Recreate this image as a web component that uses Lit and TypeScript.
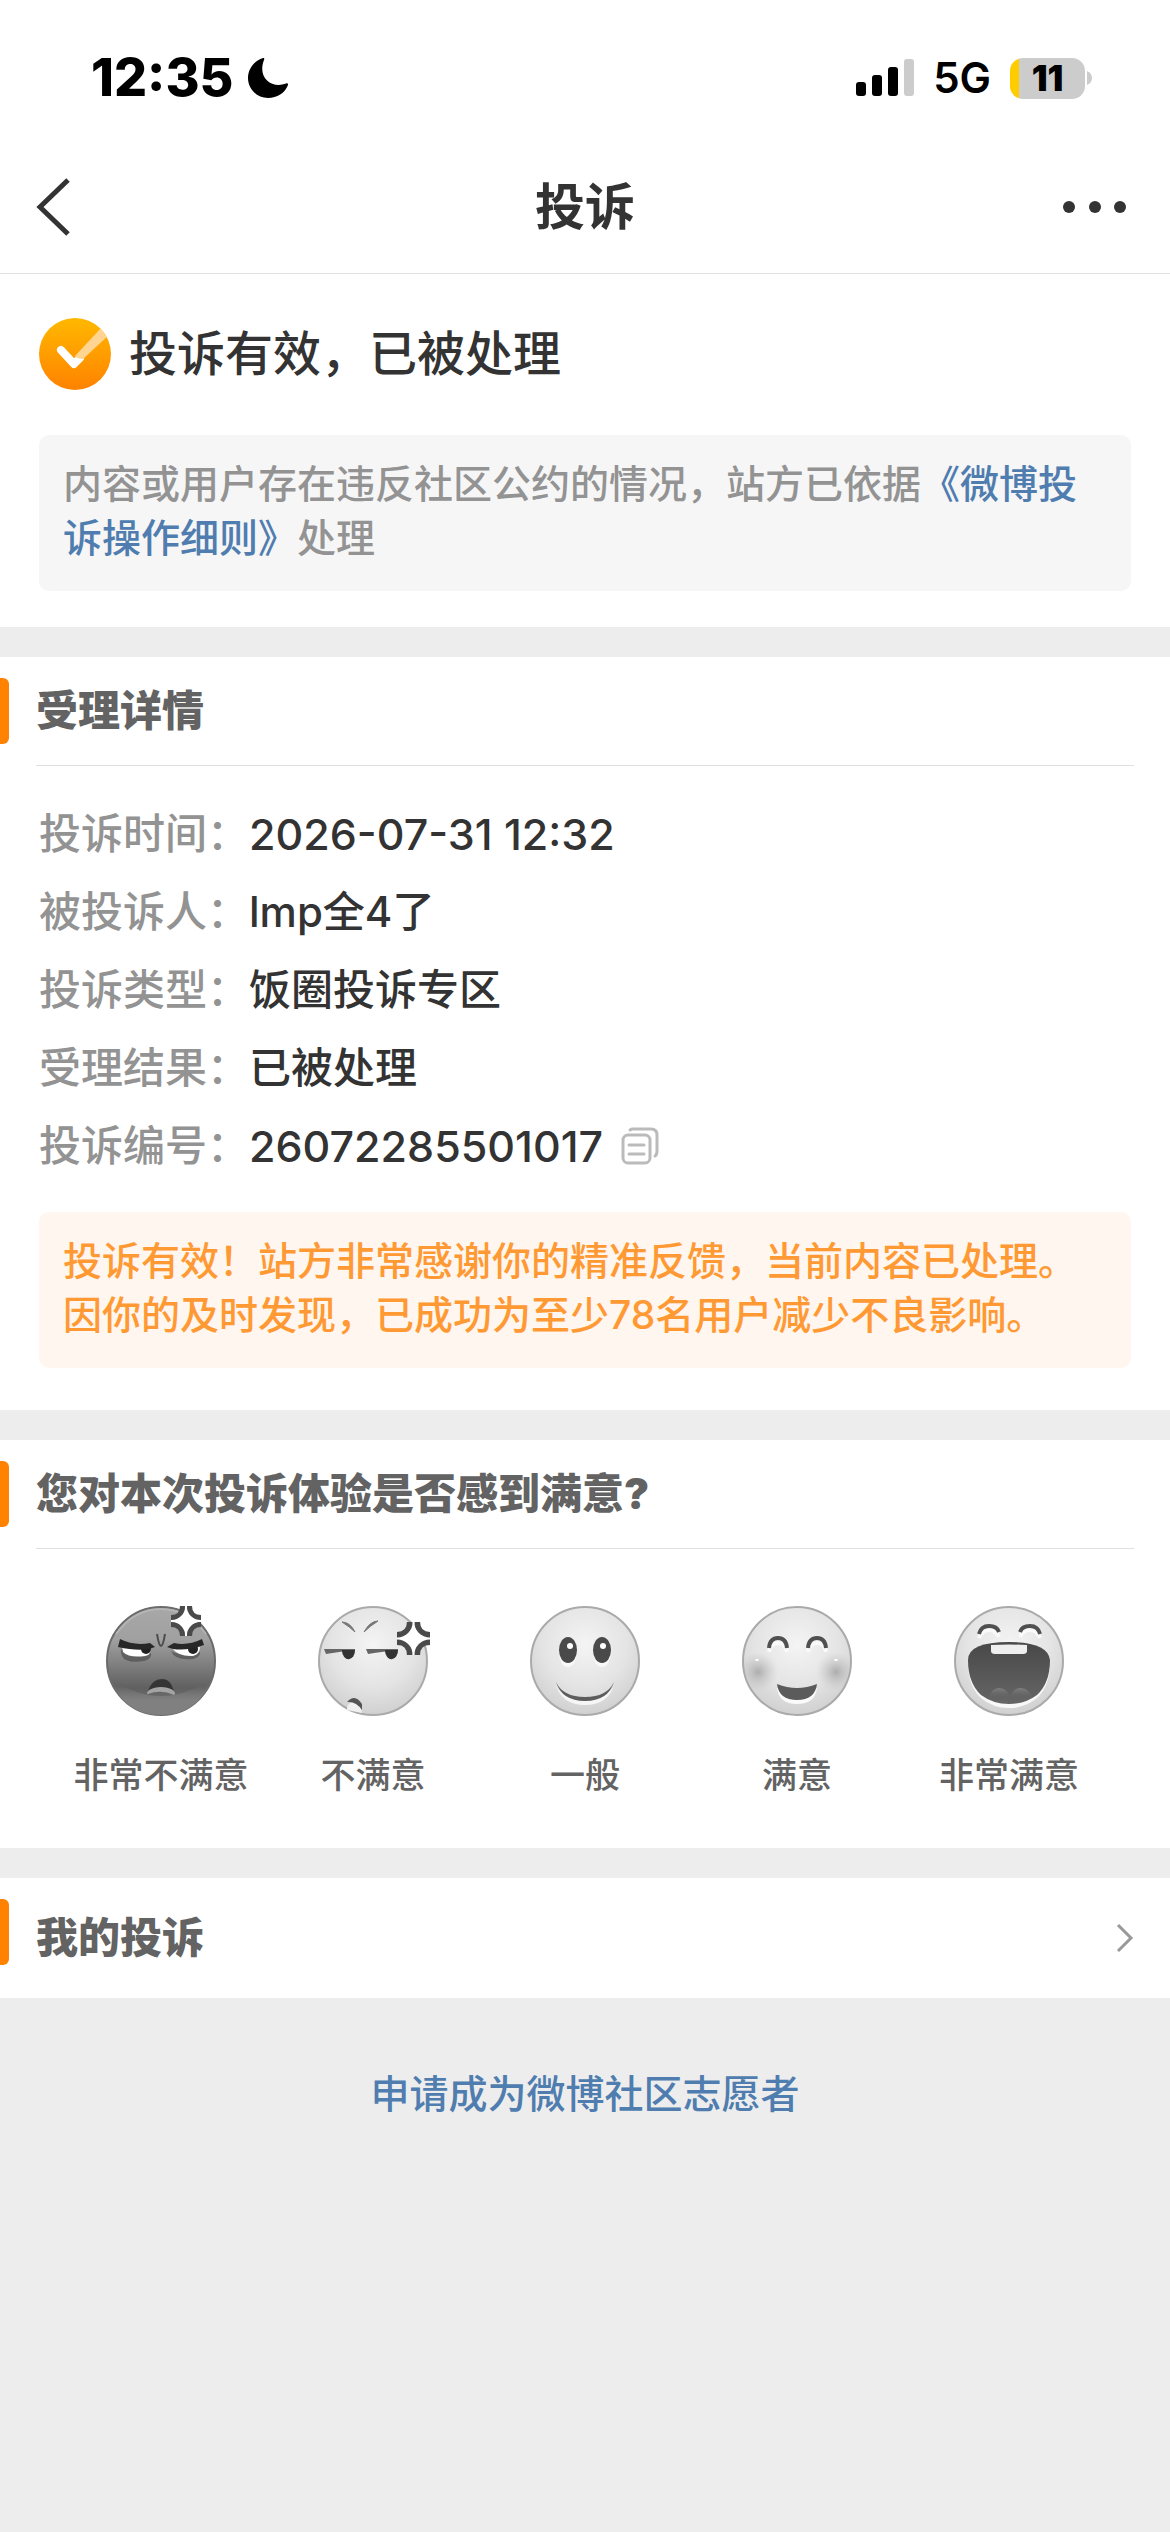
import { LitElement, html, css, svg } from "lit";
import { customElement, property, state } from "lit/decorators.js";

const details = [
  { label: "投诉时间：", value: "2026-07-31 12:32", numeric: true },
  { label: "被投诉人：", value: "lmp全4了" },
  { label: "投诉类型：", value: "饭圈投诉专区" },
  { label: "受理结果：", value: "已被处理" },
  { label: "投诉编号：", value: "26072285501017", numeric: true, copy: true },
];

const ratings = [
  { key: "furious", label: "非常不满意" },
  { key: "unhappy", label: "不满意" },
  { key: "neutral", label: "一般" },
  { key: "happy", label: "满意" },
  { key: "laughing", label: "非常满意" },
];

// the comic "vein" mark, 30 units wide
const vein = svg`
  <path d="M14 0h2a14 14 0 0 0 14 14v2a14 14 0 0 0-14 14h-2A14 14 0 0 0 0 16v-2A14 14 0 0 0 14 0z" fill="#fff" />
  <g fill="#4a4a4a">
    <path d="M9 0h5A14 13 0 0 1 0 14V9q9 0 9-9z" />
    <path d="M21 0h-5a14 13 0 0 0 14 14V9q-9 0-9-9z" />
    <path d="M9 30h5A14 13 0 0 0 0 16v5q9 0 9 9z" />
    <path d="M21 30h-5a14 13 0 0 1 14-14v5q-9 0-9 9z" />
  </g>
`;

const faces = {
  furious: svg`
    <circle cx="55" cy="55" r="54" fill="url(#dark)" stroke="#6b6b6b" stroke-width="2" />
    <path d="M4 72q51 36 102 0q-14 37-51 37T4 72z" fill="url(#chin)" />
    <path d="M10 28Q28 3 55 3t45 25" fill="none" stroke="#bbb" stroke-width="2" opacity="0.7" />
    <path d="M15 43q10 6 30 4q1 6-7 8q-18 3-22-5q-2-4-1-7z" fill="#222" opacity="0.4" />
    <path d="M16 40q12 4 29 2q0 7-6 8-16 2-22-4z" fill="#fff" />
    <circle cx="40" cy="43" r="5" fill="#222" />
    <path d="M14 33q14 7 30 4l5 4-6 2q-13 2-31-2z" fill="#272727" />
    <path d="M65 45q12 6 29 1 1 5-7 7-18 2-22-8z" fill="#222" opacity="0.4" />
    <path d="M66 42q14 2 28-1 0 7-7 9-14 1-21-8z" fill="#fff" />
    <circle cx="87" cy="43" r="5" fill="#222" />
    <path d="M96 33q-14 7-28 4l-7 4 6 2q14 2 31-4z" fill="#272727" />
    <path d="M51 28q2 12 4 12t4-12" fill="none" stroke="#4c4c4c" stroke-width="2" />
    <path d="M42 85q4-12 14-12 9 0 12 13-13-7-26-1z" fill="#353535" />
    <path d="M41 88q0-6 14-7 14 1 14 7l-1 1q-13-6-26-1z" fill="#a3a3a3" />
    <g transform="translate(65 0)">${vein}</g>
  `,
  unhappy: svg`
    <circle cx="55" cy="55" r="54" fill="url(#light)" stroke="#aaa" stroke-width="2" />
    <path d="M24 16q8 0 13 10-5-5-13-10z" fill="#777" stroke="#777" />
    <path d="M60 15q-8 0-14 11 6-6 14-11z" fill="#777" stroke="#777" />
    <path d="M6 43h31v2q-14 0-29 3z" fill="#666" />
    <path d="M24 44h13a6 8 0 0 1-13 1z" fill="#333" />
    <path d="M48 43h32v2q-14 0-30 3z" fill="#666" />
    <path d="M67 44h13a6 8 0 0 1-13 1z" fill="#333" />
    <path d="M29 104q0-8 7-8 8 0 8 11z" fill="#f0f0f0" />
    <path d="M29 96q8-9 15 2v6q-6-9-15-8z" fill="#555" />
    <g transform="translate(79 16) scale(1.1)">${vein}</g>
  `,
  neutral: svg`
    <circle cx="55" cy="55" r="54" fill="url(#light)" stroke="#aaa" stroke-width="2" />
    <ellipse cx="38" cy="47" rx="9" ry="14" fill="#f8f8f8" />
    <ellipse cx="72" cy="47" rx="9" ry="14" fill="#f8f8f8" />
    <ellipse cx="38" cy="44" rx="9" ry="13" fill="#4a4a4a" />
    <ellipse cx="72" cy="44" rx="9" ry="13" fill="#4a4a4a" />
    <circle cx="40" cy="40" r="3" fill="#fff" />
    <circle cx="73" cy="40" r="3" fill="#fff" />
    <path d="M26 79q7 15 29 15t29-15q-6 20-29 20t-29-20z" fill="#f6f6f6" />
    <path d="M26 76q7 15 29 15t29-15q-6 19-29 19t-29-19z" fill="#5d5d5d" />
  `,
  happy: svg`
    <circle cx="55" cy="55" r="54" fill="url(#light)" stroke="#aaa" stroke-width="2" />
    <circle cx="55" cy="55" r="53" fill="url(#blush-left)" />
    <circle cx="55" cy="55" r="53" fill="url(#blush-right)" />
    <ellipse cx="15" cy="54" rx="2" ry="1" fill="#fff" />
    <ellipse cx="94" cy="54" rx="2" ry="1" fill="#fff" />
    <g fill="none" stroke-width="4">
      <path d="M27 46q1-9 9-9t9 9M66 46q1-9 9-9t9 9" stroke="#fafafa" />
      <path d="M27 42q1-10 9-10t9 10M66 42q1-10 9-10t9 10" stroke="#505050" />
    </g>
    <path d="M35 82q2 16 20 16t20-16" fill="#fafafa" />
    <path d="M35 78q20 8 40 0-2 16-20 16T35 78z" fill="#5b5b5b" />
  `,
  laughing: svg`
    <circle cx="55" cy="55" r="54" fill="url(#light)" stroke="#aaa" stroke-width="2" />
    <g fill="none" stroke-width="4">
      <path d="M25 32q3-8 10-8t10 7M66 31q3-7 10-7t10 8" stroke="#fafafa" />
      <path d="M25 28q2-8 10-8t10 6M66 26q2-6 10-6t10 8" stroke="#505050" />
    </g>
    <path d="M55 39q39 0 41 18 0 23-13 35-12 10-28 10T27 92Q14 80 14 57q0-18 41-18z" fill="#f8f8f8" />
    <path d="M55 36q39 0 41 18 0 23-13 35-12 9-28 9T27 89Q14 77 14 54q0-18 41-18z" fill="url(#mouth)" />
    <path d="M35 92q2-10 10-10 9 0 11 10 2-10 11-10 8 0 11 10z" fill="url(#tongue)" />
    <path d="M37 39q18-1 36 0v6q0 3-4 3H41q-4 0-4-3z" fill="#eee" />
  `,
};

@customElement("rating-face")
class RatingFace extends LitElement {
  @property() kind = "neutral";

  static styles = css`
    :host {
      display: block;
      width: 110px;
      height: 110px;
    }
    .face {
      display: block;
      width: 100%;
      height: 100%;
      overflow: visible;
    }
  `;

  render() {
    return html`
      <svg class="face" viewBox="0 0 110 110" aria-hidden="true">
        <defs>
          <radialGradient id="light" cx="0.5" cy="0.35" r="0.65">
            <stop offset="0" stop-color="#f4f4f4" />
            <stop offset="0.6" stop-color="#e4e4e4" />
            <stop offset="1" stop-color="#d0d0d0" />
          </radialGradient>
          <linearGradient id="dark" x1="0" y1="0" x2="0" y2="1">
            <stop offset="0" stop-color="#a8a8a8" />
            <stop offset="0.3" stop-color="#a0a0a0" />
            <stop offset="0.75" stop-color="#606060" />
            <stop offset="1" stop-color="#7d7d7d" />
          </linearGradient>
          <linearGradient id="chin" x1="0" y1="0" x2="0" y2="1">
            <stop offset="0.2" stop-color="#808080" stop-opacity="0" />
            <stop offset="0.6" stop-color="#808080" />
          </linearGradient>
          <radialGradient id="blush-left" gradientUnits="userSpaceOnUse" cx="16" cy="66" r="20">
            <stop offset="0" stop-color="#adadad" />
            <stop offset="1" stop-color="#c8c8c8" stop-opacity="0" />
          </radialGradient>
          <radialGradient id="blush-right" gradientUnits="userSpaceOnUse" cx="94" cy="66" r="20">
            <stop offset="0" stop-color="#adadad" />
            <stop offset="1" stop-color="#c8c8c8" stop-opacity="0" />
          </radialGradient>
          <linearGradient id="mouth" x1="0" y1="0" x2="0" y2="1">
            <stop offset="0" stop-color="#484848" />
            <stop offset="1" stop-color="#666" />
          </linearGradient>
          <linearGradient id="tongue" x1="0" y1="0" x2="0" y2="1">
            <stop offset="0" stop-color="#808080" />
            <stop offset="1" stop-color="#666" stop-opacity="0" />
          </linearGradient>
        </defs>
        ${faces[this.kind]}
      </svg>
    `;
  }
}

@customElement("app-root")
class AppRoot extends LitElement {
  @state() rating = "";

  _copy() {
    navigator.clipboard?.writeText("26072285501017");
  }

  _rate(key: string) {
    this.rating = key;
  }

  _statusBar() {
    return html`
      <div class="status">
        <div class="clock">
          <span class="time">12:35</span>
          <svg class="moon" viewBox="0 0 40 40" aria-hidden="true">
            <path d="M15 0C6 3 0 11 0 20c0 11 9 20 20 20 9 0 17-5 20-13 .4-1.500-.6-2-2-1.500C24 31 9 20 16 2c.6-1.500.3-2.300-1-2z" />
          </svg>
        </div>
        <div class="signals">
          <svg class="bars" viewBox="0 0 58 38" aria-hidden="true">
            <rect x="0" y="23" width="10" height="14" rx="3" />
            <rect x="16" y="16" width="10" height="21" rx="3" />
            <rect x="32" y="8" width="10" height="29" rx="3" />
            <rect x="48" y="0" width="10" height="37" rx="3" fill="#ccc" />
          </svg>
          <span class="network">5G</span>
          <div class="battery">
            <span class="level">11</span>
            <svg class="nub" viewBox="0 0 5 14" aria-hidden="true">
              <path d="M0 0q5 2 5 7t-5 7z" fill="#ccc" />
            </svg>
          </div>
        </div>
      </div>
    `;
  }

  render() {
    return html`
      ${this._statusBar()}
      <header class="nav">
        <button class="icon-button" aria-label="返回">
          <svg width="34" height="58" viewBox="0 0 34 58">
            <path d="M32 2L4 29l28 27" fill="none" stroke="#333" stroke-width="5" />
          </svg>
        </button>
        <h1 class="nav-title">投诉</h1>
        <button class="icon-button" aria-label="更多">
          <svg width="72" height="14" viewBox="0 0 72 14" fill="#333">
            <circle cx="7" cy="7" r="6" />
            <circle cx="33" cy="7" r="6" />
            <circle cx="58" cy="7" r="6" />
          </svg>
        </button>
      </header>

      <main class="sections">
        <section class="panel result">
          <div class="verdict">
            <svg width="72" height="72" viewBox="0 0 72 72" aria-hidden="true">
              <defs>
                <linearGradient id="sun" x1="0" y1="0" x2="0" y2="1">
                  <stop offset="0" stop-color="#ffb800" />
                  <stop offset="1" stop-color="#ff8200" />
                </linearGradient>
                <clipPath id="disc"><circle cx="36" cy="36" r="36" /></clipPath>
              </defs>
              <circle cx="36" cy="36" r="36" fill="url(#sun)" />
              <path d="M22 32L35 46l6-6" fill="none" stroke="#fff" stroke-width="8" stroke-linecap="round" stroke-linejoin="round" />
              <path d="M62 10L36 38q2 3 8 3L72 15z" fill="#ffd591" clip-path="url(#disc)" />
            </svg>
            <h2 class="verdict-text">投诉有效，已被处理</h2>
          </div>
          <p class="note">内容或用户存在违反社区公约的情况，站方已依据<a class="link" href="#rules">《微博投诉操作细则》</a>处理</p>
        </section>

        <section class="panel">
          <div class="head"><h2 class="head-title">受理详情</h2></div>
          <dl class="details">
            ${details.map((item) => html`
              <div class="detail">
                <dt class="label">${item.label}</dt>
                <dd class="value ${item.numeric ? "numeric" : ""}">
                  ${item.value}
                  ${item.copy ? html`
                    <button class="icon-button" aria-label="复制" @click=${this._copy}>
                      <svg width="38" height="38" viewBox="0 0 38 38" fill="none" stroke="#bbb" stroke-width="3" stroke-linecap="round">
                        <rect x="2" y="8" width="27" height="28" rx="5" />
                        <path d="M9 3q1-1 3-1h18q6 0 6 6v16q0 4-2 5M8 18h15M8 27h15" />
                      </svg>
                    </button>
                  ` : ""}
                </dd>
              </div>
            `)}
          </dl>
          <p class="note thanks">投诉有效！站方非常感谢你的精准反馈，当前内容已处理。因你的及时发现，已成功为至少78名用户减少不良影响。</p>
        </section>

        <section class="panel">
          <div class="head"><h2 class="head-title">您对本次投诉体验是否感到满意?</h2></div>
          <div class="ratings">
            ${ratings.map((item) => html`
              <button class="rating" aria-pressed=${this.rating === item.key} @click=${() => this._rate(item.key)}>
                <rating-face kind=${item.key}></rating-face>
                <span class="rating-label">${item.label}</span>
              </button>
            `)}
          </div>
        </section>

        <a class="panel head mine" href="#mine">
          <span class="head-title">我的投诉</span>
          <svg width="18" height="30" viewBox="0 0 18 30" aria-hidden="true">
            <path d="M2 2l13 13L2 28" fill="none" stroke="#999" stroke-width="3" />
          </svg>
        </a>
      </main>

      <footer class="footer">
        <a class="link" href="#volunteer">申请成为微博社区志愿者</a>
      </footer>
    `;
  }

  static styles = css`
    :host {
      display: block;
      min-height: 100vh;
      background: #ededed;
      color: #333;
      font-family: Inter, "Noto Sans CJK SC", sans-serif;
      font-size: 42px;
      font-weight: 500;
    }
    h1, h2, p, dl, dd {
      margin: 0;
    }
    svg {
      display: block;
      flex: none;
    }
    button {
      padding: 0;
      border: none;
      background: none;
      color: inherit;
      font: inherit;
      cursor: pointer;
    }
    .status {
      display: flex;
      align-items: center;
      justify-content: space-between;
      padding: 48px 78px 48px 91px;
      line-height: 60px;
      background: #fff;
      color: #000;
    }
    .clock, .signals {
      display: flex;
      align-items: center;
    }
    .clock {
      gap: 14px;
    }
    .signals {
      gap: 19px;
    }
    .time {
      font-size: 52px;
      font-weight: 800;
    }
    .moon {
      width: 40px;
      height: 40px;
    }
    .bars {
      width: 58px;
      height: 38px;
    }
    .network {
      font-size: 42px;
      font-weight: 600;
    }
    .battery {
      display: flex;
      align-items: center;
      gap: 2px;
    }
    .level {
      width: 75px;
      height: 41px;
      border-radius: 13px;
      background: linear-gradient(to right, #fc0 9px, #ccc 9px);
      font-size: 35px;
      font-weight: 900;
      line-height: 41px;
      text-align: center;
    }
    .nub {
      width: 5px;
      height: 14px;
    }
    .nav {
      display: grid;
      grid-template-columns: 1fr auto 1fr;
      align-items: center;
      padding: 21px 36px 36px;
      border-bottom: 1px solid #e0e0e0;
      background: #fff;
    }
    .nav .icon-button:last-child {
      justify-self: end;
    }
    .nav .icon-button:first-child {
      justify-self: start;
    }
    .nav-title {
      font-size: 50px;
      font-weight: 700;
      line-height: 60px;
    }
    .sections {
      display: flex;
      flex-direction: column;
      gap: 30px;
    }
    .panel {
      background: #fff;
    }
    .result {
      padding: 44px 0 36px;
    }
    .verdict {
      display: flex;
      align-items: center;
      gap: 18px;
      padding: 0 39px 45px;
    }
    .verdict-text {
      font-size: 48px;
      font-weight: 500;
      line-height: 72px;
    }
    .note {
      margin: 0 39px;
      padding: 22px 24px 26px;
      border-radius: 10px;
      background: #f6f6f6;
      color: #939393;
      font-size: 39px;
      line-height: 54px;
    }
    .link {
      color: #507daf;
      text-decoration: none;
    }
    .head {
      position: relative;
      display: flex;
      align-items: center;
      justify-content: space-between;
      box-sizing: border-box;
      height: 109px;
      margin: 0 36px;
      border-bottom: 1px solid #e0e0e0;
    }
    .head::before {
      content: "";
      position: absolute;
      top: 21px;
      left: -36px;
      width: 9px;
      height: 66px;
      border-radius: 0 6px 6px 0;
      background: #ff8200;
    }
    .head-title {
      color: #636363;
      font-size: 42px;
      font-weight: 900;
      line-height: 60px;
    }
    .details {
      padding: 29px 39px 27px;
    }
    .detail {
      display: flex;
      line-height: 78px;
    }
    .label {
      color: #939393;
    }
    .value {
      display: flex;
      align-items: center;
      gap: 18px;
    }
    .numeric {
      font-size: 43px;
    }
    .thanks {
      margin-bottom: 42px;
      background: #fff6ef;
      color: #ff9933;
    }
    .ratings {
      display: grid;
      grid-template-columns: repeat(5, 1fr);
      padding: 57px 55px 48px;
    }
    .rating {
      display: flex;
      flex-direction: column;
      align-items: center;
      gap: 34px;
    }
    .rating-label {
      color: #636363;
      font-size: 35px;
      line-height: 50px;
      white-space: nowrap;
    }
    .mine {
      height: 120px;
      margin: 0;
      padding: 0 36px;
      border-bottom: none;
      text-decoration: none;
    }
    .mine::before {
      left: 0;
    }
    .footer {
      padding: 66px 36px;
      font-size: 39px;
      line-height: 60px;
      text-align: center;
    }
  `;
}
